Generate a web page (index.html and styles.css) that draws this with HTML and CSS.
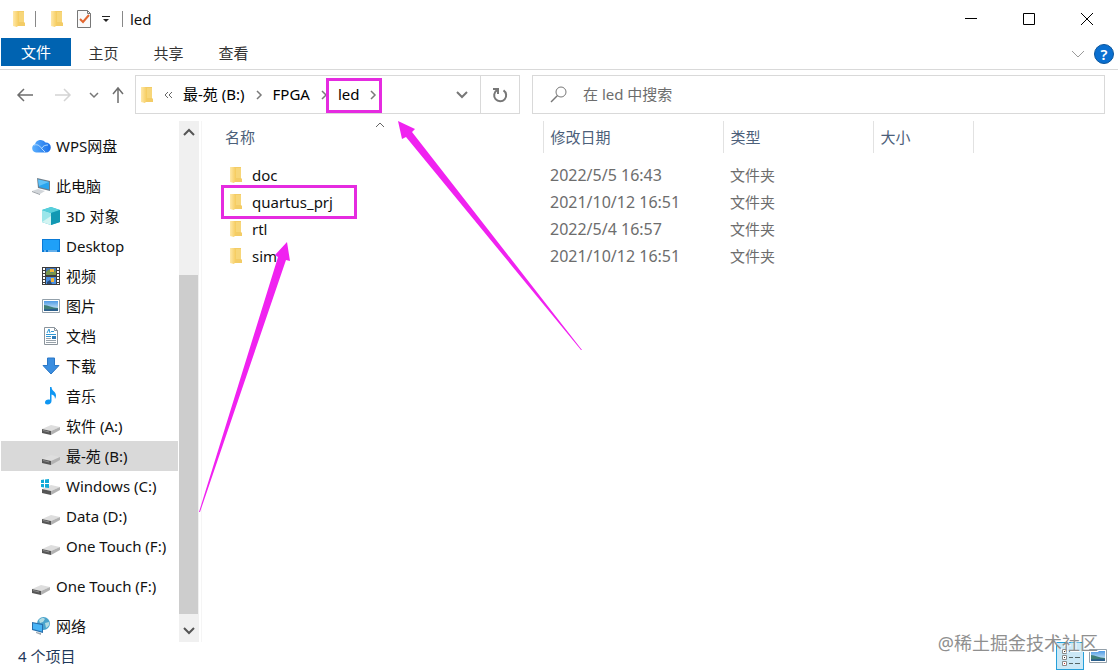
FILE: index.html
```html
<!DOCTYPE html>
<html lang="zh-CN">
<head>
    <meta charset="UTF-8">
    <meta name="viewport" content="width=device-width, initial-scale=1.0">
    <title>led</title>
    <link rel="stylesheet" href="styles.css">
</head>
<body>
    <!-- icon sprite -->
    <svg class="sprite" aria-hidden="true">
        <defs>
            <linearGradient id="g-folder" x1="0" x2="1">
                <stop offset="0" stop-color="#ffe8a8"/>
                <stop offset="1" stop-color="#f5cb5c"/>
            </linearGradient>
            <linearGradient id="g-cloud" x1="0" x2="1">
                <stop offset="0" stop-color="#5bb0ff"/>
                <stop offset="1" stop-color="#1b6fe8"/>
            </linearGradient>
            <linearGradient id="g-sky" x1="0" x2="0" y1="0" y2="1">
                <stop offset="0" stop-color="#4f9be6"/>
                <stop offset="1" stop-color="#e4f4f8"/>
            </linearGradient>
        </defs>
        <symbol id="i-folder" viewBox="0 0 14 18">
            <path d="M3 1h9v11l1 1v3H3z" fill="#f3cc66"/>
            <path d="M1 1h4l2 2v11l-2 3-4-1z" fill="url(#g-folder)"/>
            <path d="M7 2h5v10H7z" fill="#f7d679"/>
        </symbol>
        <symbol id="i-cloud" viewBox="0 0 20 16">
            <path d="M5 14.500a4.300 4.300 0 0 1-1-8.300A6 6 0 0 1 14.600 4.500 5 5 0 0 1 15 14.500z" fill="url(#g-cloud)"/>
            <path d="M3 7c4-1 6 1 8 4l3 3M11 10c1-2 3-3 6-3" fill="none" stroke="#b5dcff"/>
        </symbol>
        <symbol id="i-pc" viewBox="0 0 20 20">
            <path d="M6 2l13 3v10L7 12z" fill="#6f7f8c"/>
            <path d="M7 3.500l11 2.500v7.500L8 11z" fill="#2aa4ee"/>
            <path d="M7 3.500l11 2.500-10 4z" fill="#62c2f7"/>
            <path d="M1 15l6-2 7 2-5 3z" fill="#d2d6da"/>
            <path d="M1 15l8 3v1l-8-3z" fill="#9aa0a6"/>
        </symbol>
        <symbol id="i-cube" viewBox="0 0 20 20">
            <path d="M10 1l9 3v12l-9 3-9-3V4z" fill="#27b6cc"/>
            <path d="M1 4l9 3v12l-9-3z" fill="#9be6ea"/>
            <path d="M10 1l9 3-9 3-9-3z" fill="#58cfdb"/>
            <path d="M10 7l9-3v12l-9 3z" fill="#1298b3"/>
            <path d="M1 16l9-6v9z" fill="#d3f4f2"/>
        </symbol>
        <symbol id="i-desktop" viewBox="0 0 20 20">
            <path d="M1 3h18v13H1z" fill="#0a7ad6"/>
            <path d="M2 4h16v10H2z" fill="#1fa0f8"/>
            <path d="M3 15h2M7 15h9" stroke="#bfe5ff"/>
        </symbol>
        <symbol id="i-video" viewBox="0 0 20 20">
            <path d="M1 1h18v18H1z" fill="#3c3c3c"/>
            <path d="M5 2h10v7H5z" fill="#4678ba"/>
            <path d="M5 11h10v7H5z" fill="#4b8fe0"/>
            <path d="M5 6l3-3 3 4 4-3v5H5z" fill="#77964a"/>
            <path d="M9 3h4v3H9zM10 12h3v4h-3z" fill="#f1b53b"/>
            <path d="M6 16l3-2 2 4H6z" fill="#284b78"/>
            <path d="M3 2v16M17 2v16" stroke="#fff" stroke-width="2" stroke-dasharray="2 1"/>
        </symbol>
        <symbol id="i-picture" viewBox="0 0 20 20">
            <path d="M1.500 3.500h17v13h-17z" fill="#fff" stroke="#93a0aa"/>
            <path d="M3 5h14v10H3z" fill="url(#g-sky)"/>
            <path d="M3 9c4 0 8 3 14 3v3H3z" fill="#3f7f78"/>
            <path d="M3 13c5 1 8-1 14 0v2H3z" fill="#2b5f8c"/>
        </symbol>
        <symbol id="i-doc" viewBox="0 0 20 20">
            <path d="M3.500 1.500h10l3 3v14h-13z" fill="#fff" stroke="#8b949c"/>
            <path d="M13.500 1.500v3h3" fill="none" stroke="#8b949c"/>
            <path d="M6 7l2-4 1 4M10 5.500h3M5 8.500h10M5 10.500h5" fill="none" stroke="#2f97d4"/>
            <path d="M11 10h4v3h-4z" fill="#2e7cb8"/>
            <path d="M5 12.500h5M5 14.500h10M5 16.500h10" stroke="#98a2aa"/>
        </symbol>
        <symbol id="i-download" viewBox="0 0 20 20">
            <path d="M6.500 2h7v7.500H18L10 18 2 9.500h4.500z" fill="#3b8ee0" stroke="#2a77c6"/>
        </symbol>
        <symbol id="i-music" viewBox="0 0 20 20">
            <path d="M9 1h1.500c0 4 4.500 4.500 4.500 8.500 0 1.500-.5 2.500-1 3.500 0-3-1.500-4-3.500-4.500V15c0 2-1.800 3.500-3.800 3.500S4 17.500 4 16.200 5.500 13.500 7.500 13.500c.6 0 1 0 1.500.3z" fill="#0f96f2"/>
        </symbol>
        <symbol id="i-drive" viewBox="0 0 20 20">
            <path d="M1 13l9-4 9 2-9 4z" fill="#dedede"/>
            <path d="M1 13l9 2v4l-9-2z" fill="#555"/>
            <path d="M10 15l9-4v3l-9 5z" fill="#b2b2b2"/>
            <path d="M2 14l6 1.500v1L2 15z" fill="#8a8a8a"/>
        </symbol>
        <symbol id="i-windrive" viewBox="0 0 20 20">
            <path d="M1 13l9-4 9 2-9 4z" fill="#dedede"/>
            <path d="M1 13l9 2v4l-9-2z" fill="#555"/>
            <path d="M10 15l9-4v3l-9 5z" fill="#b2b2b2"/>
            <path d="M0 4l3-.5V7H0zM4 3.400L8 3v4H4zM0 8h3v3.500L0 11zM4 8h4v4l-4-.4z" fill="#10aad8"/>
        </symbol>
        <symbol id="i-network" viewBox="0 0 20 20">
            <circle cx="12.500" cy="7.500" r="6.500" fill="#4aa3cc"/>
            <path d="M8 4c3-3 5-2 6-1l-2 3-3 1zM14 7l4-1c1 3-1 5-3 6z" fill="#b2dbe2"/>
            <path d="M1 6l11 2v9L1 14z" fill="#286fac"/>
            <path d="M2 7.300l9 1.700v6.500L2 13z" fill="#48b4f6"/>
            <path d="M5 16l5 1v2l-5-2z" fill="#9aa7b0"/>
        </symbol>
        <symbol id="i-right" viewBox="0 0 10 12">
            <path d="M3 2l4 4-4 4" fill="none" stroke="#7a7a7a" stroke-width="1.500"/>
        </symbol>
    </svg>

    <header class="titlebar">
        <svg class="icon-folder"><use href="#i-folder"/></svg>
        <span class="titlebar__sep"></span>
        <button class="titlebar__tool" aria-label="新建文件夹"><svg class="icon-folder"><use href="#i-folder"/></svg></button>
        <button class="titlebar__tool titlebar__tool--check" aria-label="属性">
            <svg width="16" height="20" viewBox="0 0 16 20">
                <path d="M1.500 1.500h10l3 3v14h-13z" fill="#fafafa" stroke="#777"/>
                <path d="M11.500 1.500v3h3" fill="none" stroke="#777"/>
                <path d="M4 10l3 3 6-7" fill="none" stroke="#e2662f" stroke-width="2"/>
            </svg>
        </button>
        <button class="titlebar__tool titlebar__tool--more" aria-label="自定义">
            <svg width="8" height="8" viewBox="0 0 8 8"><path d="M0 1.500h8" stroke="#222"/><path d="M1 4h6L4 7z" fill="#222"/></svg>
        </button>
        <span class="titlebar__sep titlebar__sep--last"></span>
        <h1 class="titlebar__name">led</h1>
        <div class="titlebar__controls">
            <button class="titlebar__control" aria-label="最小化"><svg width="14" height="14"><path d="M1 6.500h12" stroke="#000"/></svg></button>
            <button class="titlebar__control" aria-label="最大化"><svg width="14" height="14"><path d="M1.500 1.500h11v11h-11z" fill="none" stroke="#000"/></svg></button>
            <button class="titlebar__control" aria-label="关闭"><svg width="14" height="14"><path d="M1 1l12 12M13 1L1 13" stroke="#000"/></svg></button>
        </div>
    </header>

    <nav class="tabs">
        <button class="tabs__item tabs__item--file">文件</button>
        <button class="tabs__item">主页</button>
        <button class="tabs__item">共享</button>
        <button class="tabs__item">查看</button>
        <div class="tabs__end">
            <button class="tabs__expand" aria-label="展开功能区"><svg width="14" height="8"><path d="M1 1l6 6 6-6" fill="none" stroke="#9a9a9a"/></svg></button>
            <button class="tabs__help" aria-label="帮助">?</button>
        </div>
    </nav>

    <div class="toolbar">
        <div class="toolbar__nav">
            <button class="toolbar__button" aria-label="后退"><svg width="18" height="14"><path d="M17 7H2M8 1L2 7l6 6" fill="none" stroke="#6e6e6e" stroke-width="1.500"/></svg></button>
            <button class="toolbar__button" aria-label="前进"><svg width="18" height="14"><path d="M1 7h15M10 1l6 6-6 6" fill="none" stroke="#d4d4d4" stroke-width="1.500"/></svg></button>
            <button class="toolbar__button toolbar__button--small" aria-label="最近"><svg width="10" height="8"><path d="M1 2l4 4 4-4" fill="none" stroke="#777" stroke-width="1.500"/></svg></button>
            <button class="toolbar__button toolbar__button--small" aria-label="上移"><svg width="14" height="18"><path d="M7 17V2M2 8l5-6 5 6" fill="none" stroke="#6e6e6e" stroke-width="1.500"/></svg></button>
        </div>
        <div class="address">
            <svg class="icon-folder"><use href="#i-folder"/></svg>
            <button class="address__more" aria-label="上级"><svg width="9" height="8"><path d="M4 1L1 4l3 3M8 1L5 4l3 3" fill="none" stroke="#666"/></svg></button>
            <button class="address__crumb">最-苑 (B:)</button>
            <svg class="address__arrow"><use href="#i-right"/></svg>
            <button class="address__crumb">FPGA</button>
            <svg class="address__arrow"><use href="#i-right"/></svg>
            <button class="address__crumb">led</button>
            <svg class="address__arrow"><use href="#i-right"/></svg>
            <button class="address__drop" aria-label="以前的位置"><svg width="12" height="8"><path d="M1 1l5 5 5-5" fill="none" stroke="#777" stroke-width="2"/></svg></button>
            <button class="address__refresh" aria-label="刷新">
                <svg width="16" height="16"><path d="M5 3.200A6 6 0 1 0 11.500 3.300" fill="none" stroke="#777" stroke-width="2"/><path d="M1 2h5v5" fill="none" stroke="#777" stroke-width="2"/></svg>
            </button>
        </div>
        <label class="search">
            <svg width="18" height="18"><circle cx="11" cy="6" r="5" fill="none" stroke="#777"/><path d="M7.500 9.500L1 16" stroke="#777" stroke-width="1.500"/></svg>
            <input class="search__input" type="search" placeholder="在 led 中搜索" aria-label="搜索">
        </label>
    </div>

    <div class="content">
        <nav class="tree">
            <a class="tree__item tree__item--end" href="#"><svg class="tree__icon"><use href="#i-cloud"/></svg>WPS网盘</a>
            <a class="tree__item" href="#"><svg class="tree__icon"><use href="#i-pc"/></svg>此电脑</a>
            <a class="tree__item tree__item--sub" href="#"><svg class="tree__icon"><use href="#i-cube"/></svg>3D 对象</a>
            <a class="tree__item tree__item--sub" href="#"><svg class="tree__icon"><use href="#i-desktop"/></svg>Desktop</a>
            <a class="tree__item tree__item--sub" href="#"><svg class="tree__icon"><use href="#i-video"/></svg>视频</a>
            <a class="tree__item tree__item--sub" href="#"><svg class="tree__icon"><use href="#i-picture"/></svg>图片</a>
            <a class="tree__item tree__item--sub" href="#"><svg class="tree__icon"><use href="#i-doc"/></svg>文档</a>
            <a class="tree__item tree__item--sub" href="#"><svg class="tree__icon"><use href="#i-download"/></svg>下载</a>
            <a class="tree__item tree__item--sub" href="#"><svg class="tree__icon"><use href="#i-music"/></svg>音乐</a>
            <a class="tree__item tree__item--sub" href="#"><svg class="tree__icon"><use href="#i-drive"/></svg>软件 (A:)</a>
            <a class="tree__item tree__item--sub tree__item--active" href="#"><svg class="tree__icon"><use href="#i-drive"/></svg>最-苑 (B:)</a>
            <a class="tree__item tree__item--sub" href="#"><svg class="tree__icon"><use href="#i-windrive"/></svg>Windows (C:)</a>
            <a class="tree__item tree__item--sub" href="#"><svg class="tree__icon"><use href="#i-drive"/></svg>Data (D:)</a>
            <a class="tree__item tree__item--sub tree__item--end" href="#"><svg class="tree__icon"><use href="#i-drive"/></svg>One Touch (F:)</a>
            <a class="tree__item tree__item--end" href="#"><svg class="tree__icon"><use href="#i-drive"/></svg>One Touch (F:)</a>
            <a class="tree__item" href="#"><svg class="tree__icon"><use href="#i-network"/></svg>网络</a>
        </nav>
        <div class="scroll">
            <button class="scroll__button" aria-label="向上滚动"><svg width="12" height="8"><path d="M1 7l5-5 5 5" fill="none" stroke="#555" stroke-width="2"/></svg></button>
            <div class="scroll__track"><div class="scroll__thumb"></div></div>
            <button class="scroll__button" aria-label="向下滚动"><svg width="12" height="8"><path d="M1 1l5 5 5-5" fill="none" stroke="#555" stroke-width="2"/></svg></button>
        </div>
        <main class="files">
            <svg class="files__sort" width="10" height="6"><path d="M1 5l4-4 4 4" fill="none" stroke="#666"/></svg>
            <table class="files__table">
                <thead>
                    <tr>
                        <th class="files__col-name">名称</th>
                        <th class="files__col-date">修改日期</th>
                        <th class="files__col-type">类型</th>
                        <th class="files__col-size">大小</th>
                        <th class="files__col-rest"></th>
                    </tr>
                </thead>
                <tbody>
                    <tr>
                        <td><a class="files__name" href="#"><svg class="icon-folder"><use href="#i-folder"/></svg>doc</a></td>
                        <td>2022/5/5 16:43</td>
                        <td>文件夹</td>
                        <td></td>
                        <td></td>
                    </tr>
                    <tr>
                        <td><a class="files__name" href="#"><svg class="icon-folder"><use href="#i-folder"/></svg>quartus_prj</a></td>
                        <td>2021/10/12 16:51</td>
                        <td>文件夹</td>
                        <td></td>
                        <td></td>
                    </tr>
                    <tr>
                        <td><a class="files__name" href="#"><svg class="icon-folder"><use href="#i-folder"/></svg>rtl</a></td>
                        <td>2022/5/4 16:57</td>
                        <td>文件夹</td>
                        <td></td>
                        <td></td>
                    </tr>
                    <tr>
                        <td><a class="files__name" href="#"><svg class="icon-folder"><use href="#i-folder"/></svg>sim</a></td>
                        <td>2021/10/12 16:51</td>
                        <td>文件夹</td>
                        <td></td>
                        <td></td>
                    </tr>
                </tbody>
            </table>
        </main>
    </div>

    <footer class="status">
        <span>4 个项目</span>
        <div class="status__views">
            <button class="status__view status__view--active" aria-label="详细信息">
                <svg width="22" height="22">
                    <path d="M3.500 4.500h4v4h-4zM3.500 10.500h4v4h-4zM3.500 16.500h4v4h-4z" fill="#fff" stroke="#8a8a8a"/>
                    <path d="M5 6h1v1H5zM5 12h1v1H5z" fill="#333"/>
                    <path d="M5 18h1v1H5z" fill="#c33"/>
                    <path d="M10 6.500h4M16 6.500h5M10 12.500h4M16 12.500h5M10 18.500h4M16 18.500h5" stroke="#566"/>
                </svg>
            </button>
            <button class="status__view" aria-label="大图标"><svg class="tree__icon"><use href="#i-picture"/></svg></button>
        </div>
    </footer>

    <!-- marks drawn over the window -->
    <svg class="marks" width="600" height="520" aria-hidden="true">
        <rect x="327.500" y="79.500" width="53" height="32" fill="none" stroke="#e52be0" stroke-width="3"/>
        <rect x="222.500" y="186.500" width="133" height="31" fill="none" stroke="#e52be0" stroke-width="3"/>
        <path d="M398 121L415 129L412 132L582 350L581 350L406 137L402 139z" fill="#f022f0"/>
        <path d="M287 242L290 261L286 260L200 512L199 512L278 257L275 255z" fill="#f022f0"/>
    </svg>
    <span class="watermark">@稀土掘金技术社区</span>
</body>
</html>
```

FILE: styles.css
```css
* {
    box-sizing: border-box;
}

body {
    margin: 0;
    position: relative;
    display: flex;
    flex-direction: column;
    min-height: 100vh;
    background: #fff;
    color: #111;
    font: 15px/20px "Noto Sans", "Noto Sans CJK SC", sans-serif;
}

button {
    padding: 0;
    border: 0;
    background: none;
    color: inherit;
    font: inherit;
    display: flex;
    align-items: center;
    justify-content: center;
}

a {
    color: inherit;
    text-decoration: none;
}

svg {
    display: block;
    flex: none;
}

.sprite {
    position: absolute;
    width: 0;
    height: 0;
}

.icon-folder {
    width: 14px;
    height: 18px;
}

/* title bar */
.titlebar {
    display: flex;
    align-items: center;
    height: 38px;
    padding: 0 2px 0 12px;
}

.titlebar__sep {
    width: 1px;
    height: 16px;
    margin: 0 14px 0 9px;
    background: #888;
}

.titlebar__sep--last {
    margin: 0 7px 0 12px;
}

.titlebar__tool--check {
    margin-left: 12px;
}

.titlebar__tool--more {
    margin-left: 10px;
}

.titlebar__name {
    margin: 0;
    font-size: 15px;
    font-weight: 400;
}

.titlebar__controls {
    display: flex;
    margin-left: auto;
}

.titlebar__control {
    width: 58px;
    height: 38px;
}

/* ribbon tabs */
.tabs {
    display: flex;
    height: 32px;
    padding-left: 1px;
    border-bottom: 1px solid #d9d9d9;
}

.tabs__item {
    width: 65px;
    height: 30px;
    color: #333;
}

.tabs__item--file {
    width: 70px;
    height: 28px;
    background: #0063b1;
    color: #fff;
}

.tabs__end {
    display: flex;
    align-items: center;
    gap: 9px;
    margin-left: auto;
    padding-right: 4px;
}

.tabs__help {
    width: 20px;
    height: 20px;
    border: 1px solid #0a559c;
    border-radius: 50%;
    background: #0a6fd0;
    color: #fff;
    font-weight: 600;
}

/* navigation row */
.toolbar {
    display: flex;
    padding: 5px 13px 0 0;
}

.toolbar__nav {
    display: flex;
    width: 135px;
    padding-left: 6px;
}

.toolbar__button {
    width: 38px;
    height: 39px;
}

.toolbar__button--small {
    width: 24px;
}

.address {
    display: flex;
    align-items: center;
    width: 385px;
    height: 39px;
    padding-left: 4px;
    border: 1px solid #d9d9d9;
}

.address__more {
    width: 29px;
    height: 37px;
}

.address__crumb {
    padding-bottom: 2px;
    color: #000;
    white-space: nowrap;
}

.address__arrow {
    width: 10px;
    height: 12px;
    margin: 0 9px;
}

.address__drop {
    width: 36px;
    height: 37px;
    margin-left: auto;
}

.address__refresh {
    width: 39px;
    height: 37px;
    border-left: 1px solid #d9d9d9;
}

.search {
    display: flex;
    flex: 1;
    align-items: center;
    gap: 15px;
    height: 39px;
    margin-left: 12px;
    padding: 0 17px;
    border: 1px solid #d9d9d9;
}

.search__input {
    flex: 1;
    min-width: 0;
    padding: 0 0 2px;
    border: 0;
    outline: 0;
    background: none;
    font: inherit;
}

.search__input::placeholder {
    color: #6d6d6d;
    opacity: 1;
}

/* folder tree */
.content {
    display: flex;
    flex: 1;
    padding-top: 7px;
}

.tree {
    width: 179px;
    padding: 10px 1px 0;
}

.tree__item {
    display: flex;
    align-items: center;
    gap: 5px;
    height: 30px;
    padding-left: 30px;
    white-space: nowrap;
}

.tree__item--sub {
    padding-left: 40px;
}

.tree__item--end {
    margin-bottom: 10px;
}

.tree__item--active {
    background: #d9d9d9;
}

.tree__icon {
    width: 20px;
    height: 20px;
}

.scroll {
    display: flex;
    flex-direction: column;
    width: 20px;
    background: #f0f0f0;
}

.scroll__button {
    width: 19px;
    height: 22px;
}

.scroll__button:last-child {
    height: 28px;
    padding-top: 6px;
}

.scroll__track {
    display: flex;
    flex: 1;
    flex-direction: column;
    justify-content: flex-end;
}

.scroll__thumb {
    width: 19px;
    height: 72%;
    background: #cdcdcd;
}

/* file list */
.files {
    position: relative;
    flex: 1;
    margin-left: 2px;
    border-left: 1px solid #f5f5f5;
}

.files__sort {
    position: absolute;
    top: 1px;
    left: 173px;
}

.files__table {
    width: 100%;
    border-collapse: collapse;
    table-layout: fixed;
}

.files__table th {
    height: 32px;
    padding: 0 7px;
    border-right: 1px solid #e2e2e2;
    color: #4c607a;
    font-weight: 400;
    text-align: left;
}

.files__table th.files__col-name {
    width: 341px;
    padding-left: 23px;
}

.files__table th.files__col-date {
    width: 180px;
}

.files__table th.files__col-type {
    width: 150px;
}

.files__table th.files__col-size {
    width: 100px;
}

.files__table th.files__col-rest {
    border: 0;
}

.files__table tbody::before {
    content: "";
    display: table-row;
    height: 8px;
}

.files__table td {
    height: 27px;
    padding: 0 7px;
    color: #6d6d6d;
}

.files__table td:nth-child(2) {
    font-size: 16px;
}

.files__name {
    display: flex;
    align-items: center;
    gap: 9px;
    padding-left: 20px;
    color: #111;
}

/* status bar */
.status {
    display: flex;
    justify-content: space-between;
    align-items: center;
    height: 30px;
    padding: 0 10px 2px 18px;
    color: #1e395b;
}

.status__views {
    display: flex;
    gap: 4px;
}

.status__view {
    height: 28px;
}

.status__view--active {
    width: 28px;
    border: 1px solid #26a0da;
    background: #cbe8f6;
}

.marks {
    position: absolute;
    top: 0;
    left: 0;
    pointer-events: none;
}

.watermark {
    position: absolute;
    right: 20px;
    bottom: 19px;
    color: #8f8f8f;
    font-size: 18px;
    text-shadow: 1px 1px 0 #fff;
    pointer-events: none;
}
```
